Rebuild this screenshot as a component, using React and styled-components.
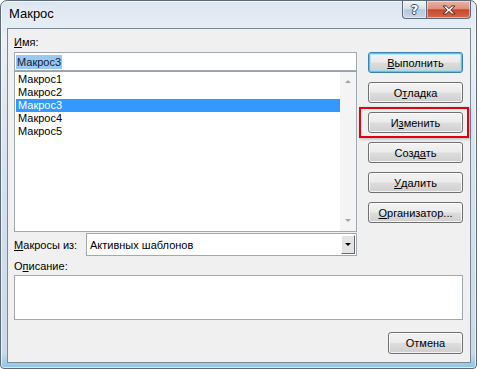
import styled, { createGlobalStyle, css } from 'styled-components';

const GlobalStyle = createGlobalStyle`
  body {
    margin: 0;
    background: #fff;
  }
`;

const Window = styled.div`
  width: 477px;
  height: 369px;
  box-sizing: border-box;
  border: 1px solid #5c6a79;
  border-radius: 7px 7px 4px 4px;
  background: linear-gradient(180deg, #dce6f1 0%, #eaf0f7 10%, #d6e2ee 45%, #cbd9e8 96%, #8cc4e6 100%);
  box-shadow: inset 0 0 0 1px rgba(255, 255, 255, 0.65);
  display: flex;
  flex-direction: column;
  padding: 0 5px 5px 6px;
  font-family: "Liberation Sans", Arial, sans-serif;
  font-size: 11px;
  color: #000;
`;

const TitleBar = styled.div`
  height: 27px;
  display: flex;
  align-items: flex-start;
`;

const Title = styled.div`
  padding: 4px 0 0 2px;
  font-size: 13px;
  line-height: 18px;
  text-shadow: 0 0 6px rgba(255, 255, 255, 0.9);
`;

const Caption = styled.div`
  margin-left: auto;
  display: flex;
`;

const CaptionButton = styled.div`
  height: 18px;
  box-sizing: border-box;
  border: 1px solid #5c6a79;
  border-top: none;
  display: flex;
  align-items: center;
  justify-content: center;
  box-shadow: inset 0 0 0 1px rgba(255, 255, 255, 0.45);
  ${({ $close }) =>
    $close
      ? css`
          width: 44px;
          border-left: none;
          border-radius: 0 0 4px 0;
          background: linear-gradient(180deg, #eab3a5 0%, #df907c 45%, #c8472d 52%, #d7694c 100%);
        `
      : css`
          width: 25px;
          border-radius: 0 0 0 4px;
          background: linear-gradient(180deg, #eef3f8 0%, #d6e0eb 45%, #b9c8da 52%, #c9d6e5 100%);
        `}
`;

const HelpGlyph = styled.span`
  font-family: "DejaVu Sans", sans-serif;
  font-size: 13px;
  font-weight: bold;
  color: #fff;
  line-height: 1;
  text-shadow: -1px 0 #3d4d60, 1px 0 #3d4d60, 0 -1px #3d4d60, 0 1px #3d4d60;
`;

const Client = styled.div`
  flex: 1;
  border: 1px solid #7b8896;
  background: #f0f0f0;
  padding: 6px 7px 0 6px;
  display: flex;
  flex-direction: column;
`;

const TopRow = styled.div`
  display: flex;
  gap: 11px;
`;

const LeftCol = styled.div`
  width: 343px;
  display: flex;
  flex-direction: column;
`;

const Label = styled.div`
  line-height: 14px;
  margin-bottom: ${({ $mb }) => $mb || 0}px;
  margin-top: ${({ $mt }) => $mt || 0}px;
`;

const Key = styled.span`
  text-decoration: underline;
`;

const NameInput = styled.div`
  height: 19px;
  box-sizing: border-box;
  border: 1px solid #a3a9b1;
  background: #fff;
  display: flex;
  align-items: center;
  padding-left: 1px;
`;

const Selection = styled.span`
  background: #99c8f2;
  color: #14202e;
  padding: 0 1px;
  line-height: 14px;
`;

const List = styled.div`
  height: 161px;
  box-sizing: border-box;
  border: 1px solid #a3a9b1;
  border-top-color: #9aa0a8;
  background: #fff;
  display: flex;
`;

const Items = styled.div`
  flex: 1;
  padding: 1px 0 0 1px;
`;

const Item = styled.div`
  height: 13px;
  line-height: 13px;
  padding-left: 2px;
  ${({ $selected }) =>
    $selected &&
    css`
      background: #3399ff;
      color: #fff;
    `}
`;

const ScrollBar = styled.div`
  width: 16px;
  background: #f4f4f4;
  display: flex;
  flex-direction: column;
  justify-content: space-between;
  align-items: center;
  padding: 8px 0 9px;
`;

const Arrow = styled.div`
  width: 0;
  height: 0;
  border-left: 3px solid transparent;
  border-right: 3px solid transparent;
  ${({ $down, $color }) =>
    $down
      ? css`
          border-top: 3px solid ${$color || '#a3a3a3'};
        `
      : css`
          border-bottom: 3px solid ${$color || '#a3a3a3'};
        `}
`;

const ButtonCol = styled.div`
  width: 95px;
  padding-top: 17px;
  display: flex;
  flex-direction: column;
  gap: 9px;
`;

const Slot = styled.div`
  position: relative;
`;

const Highlight = styled.div`
  position: absolute;
  top: -5px;
  bottom: -5px;
  left: -9px;
  right: -6px;
  border: 2px solid #e3000f;
  box-shadow: 1px 1px 3px rgba(0, 0, 0, 0.25);
  pointer-events: none;
`;

const Button = styled.div`
  height: ${({ $h }) => $h || 21}px;
  width: ${({ $w }) => ($w ? `${$w}px` : 'auto')};
  box-sizing: border-box;
  border: 1px solid #707070;
  border-radius: 3px;
  background: linear-gradient(180deg, #f3f3f3 0%, #ebebeb 48%, #dddddd 52%, #cfcfcf 100%);
  box-shadow: inset 0 0 0 1px rgba(255, 255, 255, 0.75);
  display: flex;
  align-items: center;
  justify-content: center;
  ${({ $default }) =>
    $default &&
    css`
      border-color: #3c7fb1;
      box-shadow: inset 0 0 0 1px #43cff6, inset 0 0 0 2px rgba(140, 225, 250, 0.6);
    `}
`;

const ComboRow = styled.div`
  display: flex;
  align-items: center;
  margin-top: 1px;
  height: 23px;
`;

const ComboLabel = styled.div`
  width: 72px;
`;

const Combo = styled.div`
  width: 271px;
  height: 23px;
  box-sizing: border-box;
  border: 1px solid #a3a9b1;
  background: #fff;
  display: flex;
  align-items: center;
`;

const ComboText = styled.div`
  flex: 1;
  padding-left: 3px;
`;

const DropButton = styled.div`
  width: 14px;
  height: 19px;
  margin-right: 1px;
  box-sizing: border-box;
  background: #e4e4e4;
  border-top: 1px solid #fff;
  border-left: 1px solid #fff;
  border-right: 1px solid #696969;
  border-bottom: 1px solid #696969;
  display: flex;
  align-items: center;
  justify-content: center;
`;

const DescBox = styled.div`
  height: 45px;
  box-sizing: border-box;
  border: 1px solid #a3a9b1;
  background: #fff;
  margin-top: 2px;
`;

const Footer = styled.div`
  display: flex;
  justify-content: flex-end;
  margin-top: 12px;
`;

const macros = ['Макрос1', 'Макрос2', 'Макрос3', 'Макрос4', 'Макрос5'];

const actions = [
  { pre: '', key: 'В', post: 'ыполнить', isDefault: true },
  { pre: 'О', key: 'т', post: 'ладка' },
  { pre: 'И', key: 'з', post: 'менить', marked: true },
  { pre: 'Созд', key: 'а', post: 'ть' },
  { pre: '', key: 'У', post: 'далить' },
  { pre: '', key: 'О', post: 'рганизатор...' },
];

const CloseIcon = () => (
  <svg width="14" height="10" viewBox="0 0 14 10">
    <path
      d="M1 1h3.2L7 3.6 9.8 1H13L8.8 5 13 9H9.8L7 6.4 4.2 9H1l4.2-4z"
      fill="#fff"
      stroke="#4a1c14"
      strokeWidth="0.9"
      strokeLinejoin="round"
    />
  </svg>
);

export default function App() {
  return (
    <>
      <GlobalStyle />
      <Window>
        <TitleBar>
          <Title>Макрос</Title>
          <Caption>
            <CaptionButton>
              <HelpGlyph>?</HelpGlyph>
            </CaptionButton>
            <CaptionButton $close>
              <CloseIcon />
            </CaptionButton>
          </Caption>
        </TitleBar>
        <Client>
          <TopRow>
            <LeftCol>
              <Label $mb={3}>
                <Key>И</Key>мя:
              </Label>
              <NameInput>
                <Selection>Макрос3</Selection>
              </NameInput>
              <List>
                <Items>
                  {macros.map((m) => (
                    <Item key={m} $selected={m === 'Макрос3'}>
                      {m}
                    </Item>
                  ))}
                </Items>
                <ScrollBar>
                  <Arrow />
                  <Arrow $down />
                </ScrollBar>
              </List>
            </LeftCol>
            <ButtonCol>
              {actions.map((a) => (
                <Slot key={a.post}>
                  <Button $default={a.isDefault}>
                    {a.pre}
                    <Key>{a.key}</Key>
                    {a.post}
                  </Button>
                  {a.marked && <Highlight />}
                </Slot>
              ))}
            </ButtonCol>
          </TopRow>
          <ComboRow>
            <ComboLabel>
              <Key>М</Key>акросы из:
            </ComboLabel>
            <Combo>
              <ComboText>Активных шаблонов</ComboText>
              <DropButton>
                <Arrow $down $color="#000" />
              </DropButton>
            </Combo>
          </ComboRow>
          <Label $mt={3}>
            О<Key>п</Key>исание:
          </Label>
          <DescBox />
          <Footer>
            <Button $w={75} $h={22}>
              Отмена
            </Button>
          </Footer>
        </Client>
      </Window>
    </>
  );
}
